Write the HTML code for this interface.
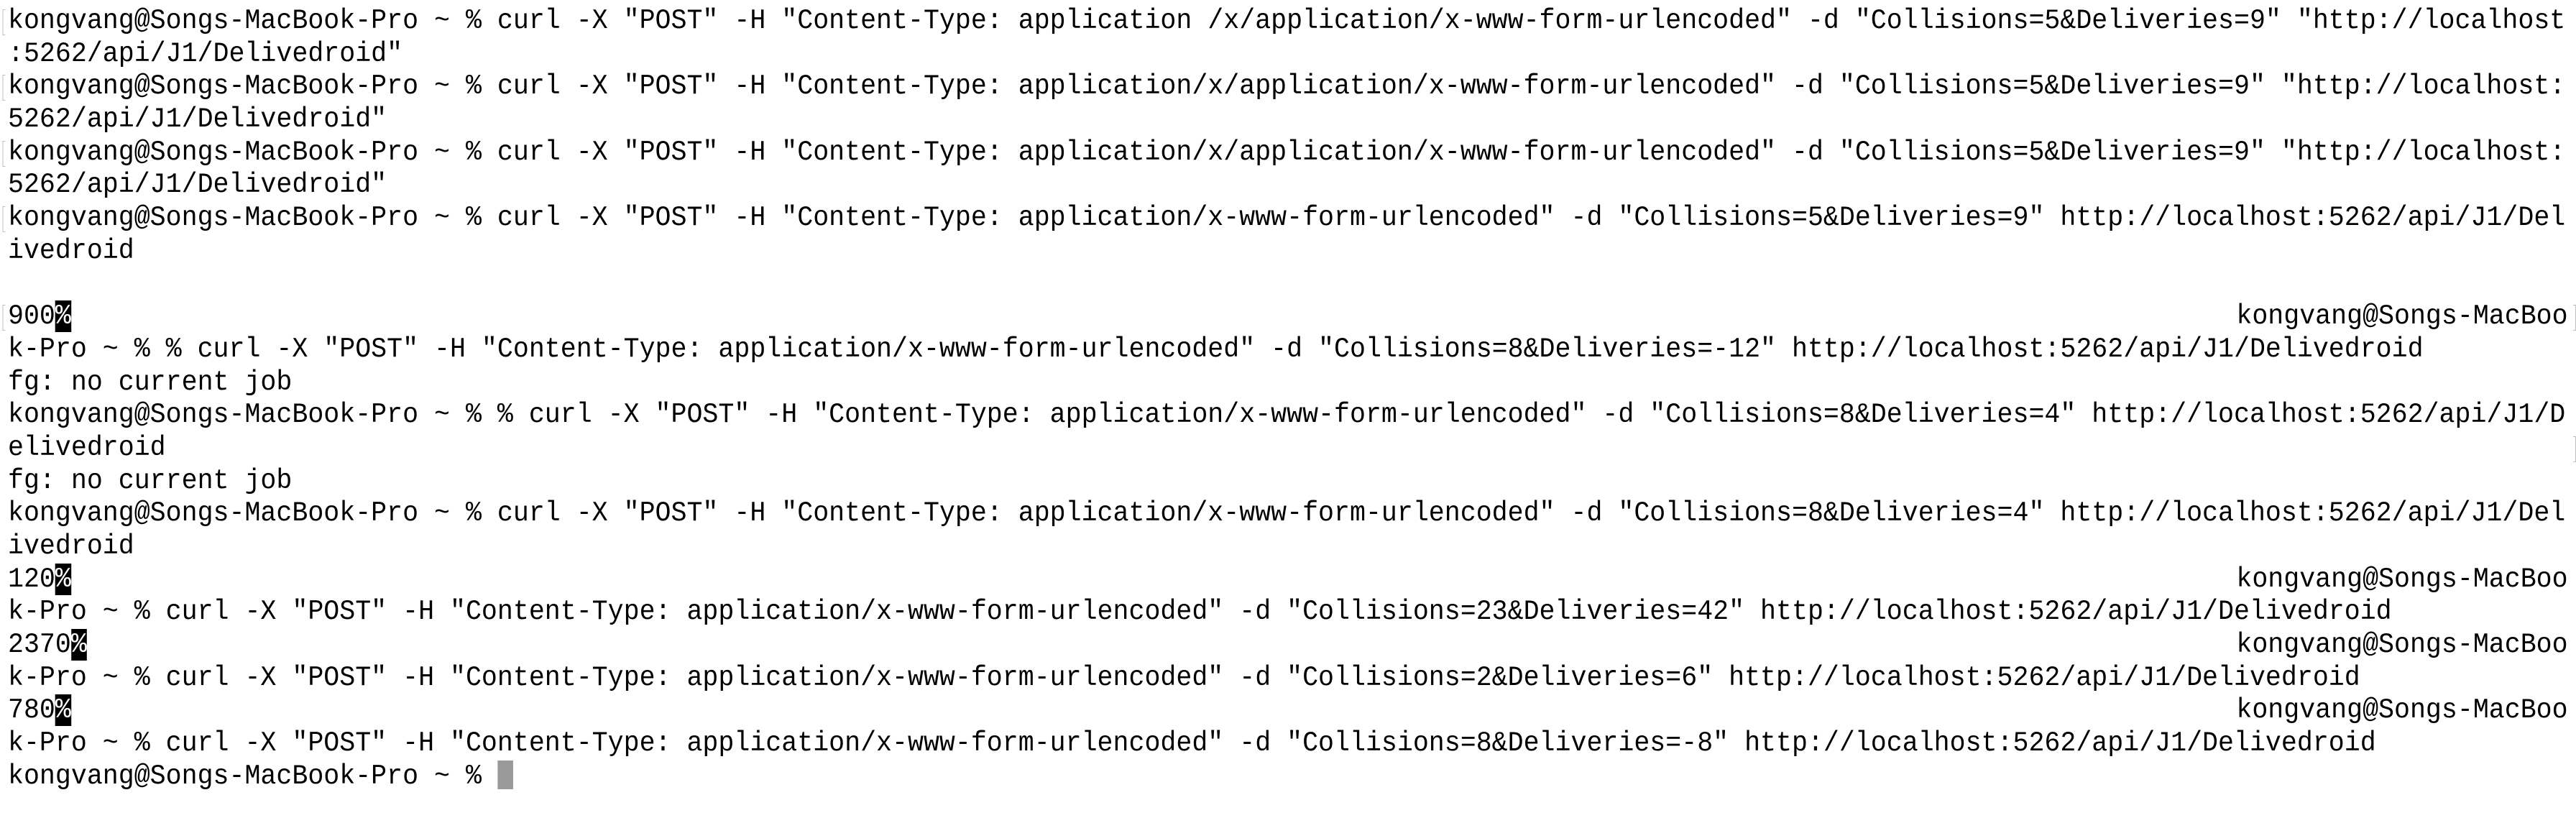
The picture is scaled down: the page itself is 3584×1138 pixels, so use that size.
<!DOCTYPE html>
<html><head><meta charset="utf-8"><style>
html,body{margin:0;padding:0;background:#fff;width:3584px;height:1138px;overflow:hidden}
#t{position:absolute;left:11px;top:7px;width:3795px;font-family:"Liberation Mono",monospace;font-size:39px;color:#000;transform:scaleX(0.9385);transform-origin:0 0}
.l{height:45.7px;line-height:45.7px;white-space:pre;position:relative}
.r{position:absolute;right:0;top:0}
.inv{background:#000;color:#fff}
.cur{display:inline-block;width:23px;height:40px;background:#999;vertical-align:-8px}
.mk{position:absolute;left:-8px;top:6px;width:3px;height:34px;border:1px solid #bbb;border-right:none}
.mkr{position:absolute;right:-12px;top:6px;width:3px;height:34px;border:1px solid #bbb;border-left:none}
</style></head><body><div id="t">
<div class="l"><span class="mk"></span>kongvang@Songs-MacBook-Pro ~ % curl -X "POST" -H "Content-Type: application /x/application/x-www-form-urlencoded" -d "Collisions=5&amp;Deliveries=9" "http://localhost</div>
<div class="l">:5262/api/J1/Delivedroid"</div>
<div class="l"><span class="mk"></span>kongvang@Songs-MacBook-Pro ~ % curl -X "POST" -H "Content-Type: application/x/application/x-www-form-urlencoded" -d "Collisions=5&amp;Deliveries=9" "http://localhost:</div>
<div class="l">5262/api/J1/Delivedroid"</div>
<div class="l"><span class="mk"></span>kongvang@Songs-MacBook-Pro ~ % curl -X "POST" -H "Content-Type: application/x/application/x-www-form-urlencoded" -d "Collisions=5&amp;Deliveries=9" "http://localhost:</div>
<div class="l">5262/api/J1/Delivedroid"</div>
<div class="l"><span class="mk"></span>kongvang@Songs-MacBook-Pro ~ % curl -X "POST" -H "Content-Type: application/x-www-form-urlencoded" -d "Collisions=5&amp;Deliveries=9" http://localhost:5262/api/J1/Del</div>
<div class="l">ivedroid</div>
<div class="l"> </div>
<div class="l"><span class="mk"></span>900<span class="inv">%</span><span class="r">kongvang@Songs-MacBoo</span><span class="mkr"></span></div>
<div class="l">k-Pro ~ % % curl -X "POST" -H "Content-Type: application/x-www-form-urlencoded" -d "Collisions=8&amp;Deliveries=-12" http://localhost:5262/api/J1/Delivedroid</div>
<div class="l">fg: no current job</div>
<div class="l">kongvang@Songs-MacBook-Pro ~ % % curl -X "POST" -H "Content-Type: application/x-www-form-urlencoded" -d "Collisions=8&amp;Deliveries=4" http://localhost:5262/api/J1/D</div>
<div class="l">elivedroid<span class="mkr"></span></div>
<div class="l">fg: no current job</div>
<div class="l">kongvang@Songs-MacBook-Pro ~ % curl -X "POST" -H "Content-Type: application/x-www-form-urlencoded" -d "Collisions=8&amp;Deliveries=4" http://localhost:5262/api/J1/Del</div>
<div class="l">ivedroid</div>
<div class="l">120<span class="inv">%</span><span class="r">kongvang@Songs-MacBoo</span></div>
<div class="l">k-Pro ~ % curl -X "POST" -H "Content-Type: application/x-www-form-urlencoded" -d "Collisions=23&amp;Deliveries=42" http://localhost:5262/api/J1/Delivedroid</div>
<div class="l">2370<span class="inv">%</span><span class="r">kongvang@Songs-MacBoo</span></div>
<div class="l">k-Pro ~ % curl -X "POST" -H "Content-Type: application/x-www-form-urlencoded" -d "Collisions=2&amp;Deliveries=6" http://localhost:5262/api/J1/Delivedroid</div>
<div class="l">780<span class="inv">%</span><span class="r">kongvang@Songs-MacBoo</span></div>
<div class="l">k-Pro ~ % curl -X "POST" -H "Content-Type: application/x-www-form-urlencoded" -d "Collisions=8&amp;Deliveries=-8" http://localhost:5262/api/J1/Delivedroid</div>
<div class="l">kongvang@Songs-MacBook-Pro ~ % <span class="cur"></span></div>
</div></body></html>
